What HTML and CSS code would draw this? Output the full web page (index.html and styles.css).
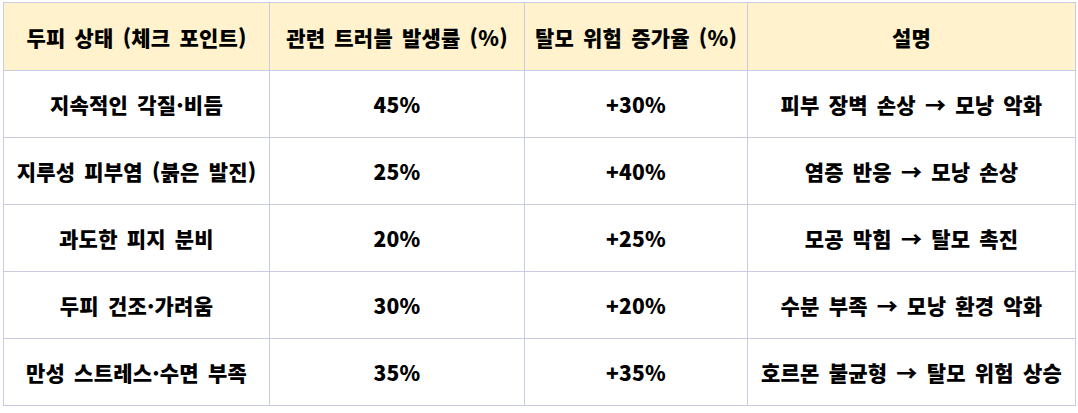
FILE: index.html
```html
<!DOCTYPE html>
<html lang="ko">
<head>
<meta charset="utf-8">
<link rel="stylesheet" href="styles.css">
</head>
<body>
<table class="grid">
  <colgroup>
    <col class="c1"><col class="c2"><col class="c3"><col class="c4">
  </colgroup>
  <thead>
    <tr>
      <th>두피 상태 (체크 포인트)</th>
      <th>관련 트러블 발생률 (%)</th>
      <th>탈모 위험 증가율 (%)</th>
      <th>설명</th>
    </tr>
  </thead>
  <tbody>
    <tr><td>지속적인 각질·비듬</td><td>45%</td><td>+30%</td><td>피부 장벽 손상 → 모낭 악화</td></tr>
    <tr><td>지루성 피부염 (붉은 발진)</td><td>25%</td><td>+40%</td><td>염증 반응 → 모낭 손상</td></tr>
    <tr><td>과도한 피지 분비</td><td>20%</td><td>+25%</td><td>모공 막힘 → 탈모 촉진</td></tr>
    <tr><td>두피 건조·가려움</td><td>30%</td><td>+20%</td><td>수분 부족 → 모낭 환경 악화</td></tr>
    <tr><td>만성 스트레스·수면 부족</td><td>35%</td><td>+35%</td><td>호르몬 불균형 → 탈모 위험 상승</td></tr>
  </tbody>
</table>
</body>
</html>
```

FILE: styles.css
```css
html, body {
  margin: 0;
  background: #ffffff;
}
body {
  padding: 2px 3px;
  font-family: "Noto Sans CJK KR", "Noto Sans", sans-serif;
  color: #000000;
}
.grid {
  border-collapse: collapse;
  table-layout: fixed;
  width: 1072px;
}
.c1 { width: 266px; }
.c2 { width: 255px; }
.c3 { width: 223px; }
.c4 { width: 328px; }
.grid th, .grid td {
  border: 1px solid #c9cce0;
  text-align: center;
  vertical-align: middle;
  padding: 0;
  font-size: 21px;
  line-height: 26px;
  font-weight: 900;
  letter-spacing: 0.2px;
  word-spacing: 3px;
  white-space: nowrap;
}
.grid th {
  background: #fff2cc;
  height: 67px;
}
.grid td {
  height: 66px;
}
```
